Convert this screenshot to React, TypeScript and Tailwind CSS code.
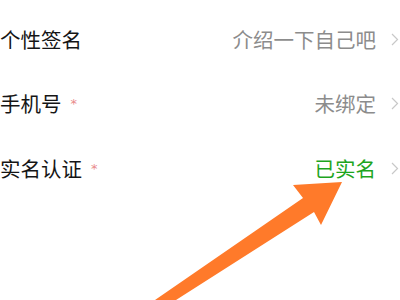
import React from "react";

const Chevron = () => (
  <svg width="8" height="13" viewBox="0 0 8 13" className="shrink-0">
    <path d="M1 1 L6.5 6.5 L1 12" fill="none" stroke="#c8c8c8" strokeWidth="1.2" />
  </svg>
);

const Star = () => (
  <span className="ml-[9px] text-[13px] leading-none text-[#e98b8b]" style={{ fontFamily: "'DejaVu Sans', sans-serif" }}>
    *
  </span>
);

function Row({ label, star, value, valueClass }: { label: string; star?: boolean; value: string; valueClass: string }) {
  return (
    <div className="flex h-[64.5px] items-center pr-[1px]">
      <div className="flex items-center text-[20.5px] text-[#151515]">
        <span>{label}</span>
        {star && <Star />}
      </div>
      <div className="flex-1" />
      <span className={`text-[20.5px] ${valueClass}`}>{value}</span>
      <div className="ml-[15px] flex items-center">
        <Chevron />
      </div>
    </div>
  );
}

export default function App() {
  return (
    <div
      className="relative h-[300px] w-[400px] overflow-hidden bg-white"
      style={{ fontFamily: "'Noto Sans CJK SC', 'Noto Sans', sans-serif" }}
    >
      <div className="pt-[7px]">
        <Row label="个性签名" value="介绍一下自己吧" valueClass="text-[#8c8c8c]" />
        <Row label="手机号" star value="未绑定" valueClass="text-[#8c8c8c]" />
        <Row label="实名认证" star value="已实名" valueClass="text-[#1ea51e]" />
      </div>
      <svg className="pointer-events-none absolute left-0 top-0" width="400" height="300" viewBox="0 0 400 300">
        <polygon
          points="342,182 321,225 314,212 176,300 155,300 303,198 293,185"
          fill="#ff7a2a"
        />
      </svg>
    </div>
  );
}
